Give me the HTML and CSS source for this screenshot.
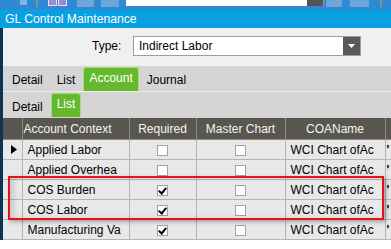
FILE: index.html
```html
<!doctype html>
<html>
  <head>
    <title>GL Control Maintenance</title>
    <meta charset="utf-8">
    <link rel="stylesheet" href="styles.css">
  </head>
  <body>
    <div class="toolbar">
      <span class="tb-icon tb-a"></span>
      <span class="tb-dots"></span>
      <span class="tb-sq"></span>
      <span class="tb-sq tb-sq2"></span>
      <span class="tb-btn tb-b1"></span>
      <span class="tb-btn tb-b2"></span>
      <div class="tb-input">Indirect Labor</div>
      <span class="tb-dark"></span>
      <span class="tb-btn tb-b3"></span>
      <span class="tb-btn tb-b4"></span>
      <span class="tb-dots tb-dots2"></span>
    </div>
    <div class="titlebar">GL Control Maintenance</div>
    <div class="frame">
      <div class="edge"></div>
      <div class="content">
        <div class="type-panel">
          <label class="type-label">Type:</label>
          <div class="select">
            <span class="select-text">Indirect Labor</span>
            <span class="select-btn"><svg width="7" height="4" viewBox="0 0 7 4"><path d="M0 0h7L3.5 4z" fill="#fff"/></svg></span>
          </div>
        </div>
        <div class="tabs tabs-top">
          <span class="tab">Detail</span>
          <span class="tab">List</span>
          <span class="tab active">Account</span>
          <span class="tab">Journal</span>
        </div>
        <div class="tabs tabs-sub">
          <span class="tab">Detail</span>
          <span class="tab active">List</span>
        </div>
        <div class="grid-wrap">
          <table class="grid">
            <colgroup>
              <col class="c-ind"><col class="c-ctx"><col class="c-req"><col class="c-mst"><col class="c-coa"><col class="c-more">
            </colgroup>
            <thead>
              <tr><th></th><th class="h-ctx">Account Context</th><th>Required</th><th>Master Chart</th><th>COAName</th><th></th></tr>
            </thead>
            <tbody>
              <tr><td class="ind"><svg width="6" height="9" viewBox="0 0 6 9"><path d="M0 0l6 4.5L0 9z" fill="#000"/></svg></td><td class="txt">Applied Labor</td><td><span class="chk"></span></td><td><span class="chk"></span></td><td class="txt">WCI Chart ofAc</td><td class="more">'</td></tr>
              <tr><td class="ind"></td><td class="txt">Applied Overhea</td><td><span class="chk"></span></td><td><span class="chk"></span></td><td class="txt">WCI Chart ofAc</td><td class="more">'</td></tr>
              <tr><td class="ind"></td><td class="txt">COS Burden</td><td><span class="chk on"></span></td><td><span class="chk"></span></td><td class="txt">WCI Chart ofAc</td><td class="more">'</td></tr>
              <tr><td class="ind"></td><td class="txt">COS Labor</td><td><span class="chk on"></span></td><td><span class="chk"></span></td><td class="txt">WCI Chart ofAc</td><td class="more">'</td></tr>
              <tr><td class="ind"></td><td class="txt">Manufacturing Va</td><td><span class="chk on"></span></td><td><span class="chk"></span></td><td class="txt">WCI Chart ofAc</td><td class="more">'</td></tr>
            </tbody>
          </table>
          <div class="highlight"></div>
        </div>
      </div>
    </div>
  </body>
</html>
```
FILE: styles.css
```css
body {
  margin: 0;
  background: #fff;
  font-family: "Liberation Sans", Arial, sans-serif;
  font-size: 12px;
  color: #000;
  overflow: hidden;
}

/* top toolbar, mostly scrolled off */
.toolbar {
  height: 10px;
  background: #2f8ad3;
  display: flex;
  align-items: flex-start;
  overflow: hidden;
}
.tb-icon {
  width: 7px;
  height: 5px;
  margin-left: 20px;
  background: #7fb6e6;
}
.tb-dots {
  width: 2px;
  height: 7px;
  margin-left: 9px;
  background: repeating-linear-gradient(#c99a5a 0 1px, transparent 1px 2px);
}
.tb-sq {
  width: 7px;
  height: 5px;
  margin-left: 10px;
  background: #9a8cd0;
  border: 1px solid #e8e4f8;
  border-top: 0;
}
.tb-sq2 {
  margin-left: 1px;
}
.tb-btn {
  height: 7px;
  background: #6ea6dc;
}
.tb-b1 { width: 17px; margin-left: 10px; }
.tb-b2 { width: 18px; margin-left: 7px; }
.tb-input {
  width: 181px;
  height: 18px;
  margin-top: -12px;
  margin-left: 7px;
  background: #fff;
  line-height: 16px;
  padding-left: 8px;
  box-sizing: border-box;
  font-size: 13px;
}
.tb-dark {
  width: 16px;
  height: 6px;
  background: #555;
  border-right: 1px solid #999;
}
.tb-b3 { width: 16px; margin-left: 2px; }
.tb-b4 { width: 19px; margin-left: 8px; }
.tb-dots2 { margin-left: 11px; }

.titlebar {
  height: 18px;
  line-height: 18px;
  background: #07a1e2;
  color: #fff;
  padding-left: 5px;
  font-size: 12.2px;
}

.frame {
  display: flex;
}
.edge {
  width: 3px;
  background: #0b3352;
  flex: none;
}
.content {
  flex: 1;
  min-width: 0;
  overflow: hidden;
}

.type-panel {
  height: 38px;
  background: #f0f0f0;
  display: flex;
  align-items: flex-start;
  padding: 8px 0 0 89px;
  box-sizing: border-box;
}
.type-label {
  width: 41px;
  line-height: 20px;
}
.select {
  width: 228px;
  height: 20px;
  box-sizing: border-box;
  background: #fff;
  border: 1px solid #9c9c9c;
  display: flex;
  align-items: stretch;
}
.select-text {
  flex: 1;
  padding-left: 5px;
  line-height: 18px;
}
.select-btn {
  width: 17px;
  background: #595959;
  display: flex;
  align-items: center;
  justify-content: center;
}

.tabs {
  background: #d5d5d5;
  display: flex;
  align-items: flex-end;
  padding-left: 3px;
}
.tabs-top {
  height: 25px;
  border-bottom: 1px solid #ebebeb;
}
.tabs-sub {
  height: 26px;
}
.tab {
  padding: 0 6px;
  margin-right: 2px;
  height: 24px;
  line-height: 26px;
  box-sizing: border-box;
}
.tab.active {
  background: #65b92c;
  color: #fff;
  border: 1px solid #a6de7c;
  border-bottom: 0;
  border-radius: 3px 3px 0 0;
  line-height: 20px;
  padding: 0 5px;
}
.tabs-sub .tab.active {
  height: 24px;
  margin-bottom: 1px;
}

.grid-wrap {
  position: relative;
}
.grid {
  border-collapse: collapse;
  table-layout: fixed;
  width: 422px;
}
.c-ind { width: 19px; }
.c-ctx { width: 107px; }
.c-req { width: 67px; }
.c-mst { width: 89px; }
.c-coa { width: 100px; }
.c-more { width: 40px; }
.grid th {
  height: 21px;
  background: #59564f;
  color: #f4f4f4;
  font-weight: normal;
  border: 1px solid #8d8b86;
  border-top: 0;
  padding: 0;
  white-space: nowrap;
  overflow: hidden;
}
.grid th:first-child {
  border-left: 0;
}
.grid th.h-ctx {
  text-align: left;
  padding-left: 1px;
}
.grid td {
  height: 19px;
  background: #e8e8e8;
  border: 1px solid #b3b3b3;
  padding: 0;
  text-align: center;
  white-space: nowrap;
  overflow: hidden;
}
.grid td:first-child {
  border-left: 0;
}
.grid td.txt {
  text-align: left;
  padding-left: 5px;
}
.grid td.ind svg {
  display: block;
  margin-left: 8px;
}
.grid td.more {
  text-align: left;
  padding-left: 1px;
  font-weight: bold;
}
.chk {
  display: inline-block;
  width: 11px;
  height: 11px;
  box-sizing: border-box;
  background: #fff;
  border: 1px solid #a2a2a2;
  vertical-align: middle;
  position: relative;
}
.chk.on::after {
  content: "";
  position: absolute;
  left: 2px;
  top: 0px;
  width: 3px;
  height: 6px;
  border: solid #000;
  border-width: 0 2px 2px 0;
  transform: rotate(40deg);
}

/* annotation drawn over the grid */
.highlight {
  position: absolute;
  left: 5px;
  top: 58px;
  width: 376px;
  height: 44px;
  box-sizing: border-box;
  border: 2px solid #e8101a;
  box-shadow: 2px 2px 4px rgba(0, 0, 0, 0.3), inset 4px 0 5px rgba(0, 0, 0, 0.12);
}
```
